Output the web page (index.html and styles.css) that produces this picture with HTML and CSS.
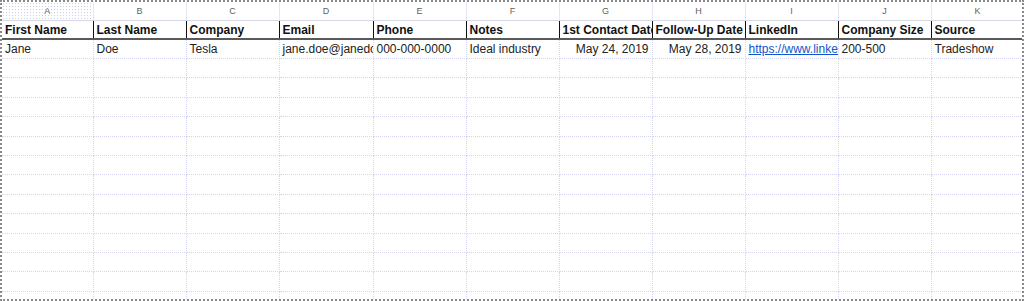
FILE: index.html
```html
<!DOCTYPE html>
<html lang="en">
<head>
    <meta charset="UTF-8">
    <title>Leads</title>
    <link rel="stylesheet" href="styles.css">
</head>
<body>
    <div class="sheet">
        <table class="grid">
            <colgroup>
                <col class="col-first">
                <col><col><col class="col-wide"><col><col><col><col><col><col><col>
            </colgroup>
            <tr class="letters">
                <th class="picked">A</th><th>B</th><th>C</th><th>D</th><th>E</th><th>F</th>
                <th>G</th><th>H</th><th>I</th><th>J</th><th>K</th>
            </tr>
            <tr class="head">
                <td>First Name</td>
                <td>Last Name</td>
                <td>Company</td>
                <td>Email</td>
                <td>Phone</td>
                <td>Notes</td>
                <td>1st Contact Date</td>
                <td>Follow-Up Date</td>
                <td>LinkedIn</td>
                <td>Company Size</td>
                <td>Source</td>
            </tr>
            <tr class="row">
                <td>Jane</td>
                <td>Doe</td>
                <td>Tesla</td>
                <td>jane.doe@janedoe.com</td>
                <td>000-000-0000</td>
                <td>Ideal industry</td>
                <td class="num">May 24, 2019</td>
                <td class="num">May 28, 2019</td>
                <td><a href="#">https://www.linkedin.com/in/janedoe</a></td>
                <td>200-500</td>
                <td>Tradeshow</td>
            </tr>
            <tr class="row"><td></td><td></td><td></td><td></td><td></td><td></td><td></td><td></td><td></td><td></td><td></td></tr>
            <tr class="row"><td></td><td></td><td></td><td></td><td></td><td></td><td></td><td></td><td></td><td></td><td></td></tr>
            <tr class="row"><td></td><td></td><td></td><td></td><td></td><td></td><td></td><td></td><td></td><td></td><td></td></tr>
            <tr class="row"><td></td><td></td><td></td><td></td><td></td><td></td><td></td><td></td><td></td><td></td><td></td></tr>
            <tr class="row"><td></td><td></td><td></td><td></td><td></td><td></td><td></td><td></td><td></td><td></td><td></td></tr>
            <tr class="row"><td></td><td></td><td></td><td></td><td></td><td></td><td></td><td></td><td></td><td></td><td></td></tr>
            <tr class="row"><td></td><td></td><td></td><td></td><td></td><td></td><td></td><td></td><td></td><td></td><td></td></tr>
            <tr class="row"><td></td><td></td><td></td><td></td><td></td><td></td><td></td><td></td><td></td><td></td><td></td></tr>
            <tr class="row"><td></td><td></td><td></td><td></td><td></td><td></td><td></td><td></td><td></td><td></td><td></td></tr>
            <tr class="row"><td></td><td></td><td></td><td></td><td></td><td></td><td></td><td></td><td></td><td></td><td></td></tr>
            <tr class="row"><td></td><td></td><td></td><td></td><td></td><td></td><td></td><td></td><td></td><td></td><td></td></tr>
            <tr class="row"><td></td><td></td><td></td><td></td><td></td><td></td><td></td><td></td><td></td><td></td><td></td></tr>
            <tr class="row"><td></td><td></td><td></td><td></td><td></td><td></td><td></td><td></td><td></td><td></td><td></td></tr>
        </table>
    </div>
</body>
</html>
```

FILE: styles.css
```css
body {
    margin: 0;
    background: #ffffff;
    font-family: "Liberation Sans", Arial, sans-serif;
}

.sheet {
    box-sizing: border-box;
    width: 1024px;
    height: 301px;
    border: 2px dotted #8a8a8a;
    overflow: hidden;
    background: #ffffff;
}

.grid {
    border-collapse: collapse;
    table-layout: fixed;
    width: 1022px;
}

.grid col {
    width: 93px;
}

.grid .col-first {
    width: 91px;
}

.grid .col-wide {
    width: 94px;
}

.grid th,
.grid td {
    padding: 0 3px;
    white-space: nowrap;
    overflow: hidden;
    font-size: 12px;
    box-sizing: border-box;
}

.letters th {
    height: 18px;
    font-size: 9px;
    font-weight: normal;
    color: #5f5f5f;
    text-align: center;
    border-right: 1px solid #e6e6f0;
    border-bottom: 1px solid #d8d8e6;
}

.letters th.picked {
    background-image: radial-gradient(#c9cfe8 0.6px, transparent 0.8px);
    background-size: 3px 3px;
}

.head td {
    height: 19px;
    padding-top: 1px;
    font-weight: bold;
    color: #111111;
    border-right: 1px solid #111111;
    border-bottom: 2px solid #5a5a5a;
}

.row td {
    height: 19.42px;
    color: #222222;
    border-right: 1px dotted #d3d3f2;
    border-bottom: 1px dotted #d3d3f2;
}

.row td.num {
    text-align: right;
}

.row a {
    color: #1155cc;
}
```
